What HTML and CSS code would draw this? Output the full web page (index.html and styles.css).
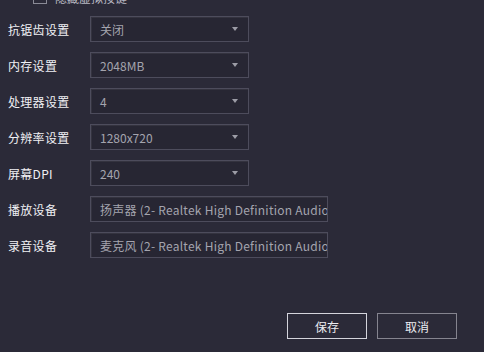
FILE: index.html
```html
<!DOCTYPE html>
<html lang="zh">
<head>
<meta charset="utf-8">
<link rel="stylesheet" href="styles.css">
</head>
<body>
<div class="page">
  <div class="top-row">
    <span class="check"></span>
    <span class="top-text">隐藏虚拟按键</span>
  </div>
  <div class="form">
    <div class="row"><span class="label">抗锯齿设置</span><div class="select"><span>关闭</span><i class="arrow"></i></div></div>
    <div class="row"><span class="label">内存设置</span><div class="select"><span>2048MB</span><i class="arrow"></i></div></div>
    <div class="row"><span class="label">处理器设置</span><div class="select"><span>4</span><i class="arrow"></i></div></div>
    <div class="row"><span class="label">分辨率设置</span><div class="select"><span>1280x720</span><i class="arrow"></i></div></div>
    <div class="row"><span class="label">屏幕DPI</span><div class="select"><span>240</span><i class="arrow"></i></div></div>
    <div class="row"><span class="label">播放设备</span><div class="input"><span>扬声器 (2- Realtek High Definition Audio)</span></div></div>
    <div class="row"><span class="label">录音设备</span><div class="input"><span>麦克风 (2- Realtek High Definition Audio)</span></div></div>
  </div>
  <div class="actions">
    <button class="btn btn-primary">保存</button>
    <button class="btn">取消</button>
  </div>
</div>
</body>
</html>
```
FILE: styles.css
```css
html, body {
  margin: 0;
  padding: 0;
  background: #2b2a38;
}
body {
  font-family: "Noto Sans CJK SC", "Noto Sans", sans-serif;
  font-size: 12px;
  color: #e6e6ea;
}
.page {
  width: 484px;
  height: 352px;
  display: flex;
  flex-direction: column;
  overflow: hidden;
}
.top-row {
  margin-top: -11px;
  height: 16px;
  display: flex;
  align-items: center;
  gap: 8px;
  padding-left: 33px;
  color: #b8b8c2;
}
.check {
  width: 14px;
  height: 14px;
  box-sizing: border-box;
  border: 1px solid #8a8a96;
}
.form {
  margin-top: 11px;
  display: flex;
  flex-direction: column;
  gap: 10px;
  padding-left: 8px;
}
.row {
  display: flex;
  align-items: center;
  height: 26px;
}
.label {
  width: 82px;
  flex: none;
  color: #f0f0f4;
  letter-spacing: 0.3px;
}
.select, .input {
  height: 26px;
  box-sizing: border-box;
  border: 1px solid #4d4c5c;
  box-shadow: inset 1px 1px 0 #34333f;
  background: #272633;
  display: flex;
  align-items: center;
  padding: 0 9px;
  color: #a4a4ae;
  overflow: hidden;
  white-space: nowrap;
}
.select {
  width: 159px;
  justify-content: space-between;
}
.input {
  width: 238px;
  padding-right: 0;
  letter-spacing: 0.25px;
}
.arrow {
  width: 0;
  height: 0;
  border-left: 3.5px solid transparent;
  border-right: 3.5px solid transparent;
  border-top: 4px solid #9c9ca6;
  margin-right: 1px;
}
.actions {
  margin-top: auto;
  display: flex;
  justify-content: flex-end;
  gap: 10px;
  padding: 0 27px 13px 0;
}
.btn {
  width: 80px;
  height: 26px;
  box-sizing: border-box;
  background: #2b2a38;
  border: 1px solid #85848f;
  color: #ececf0;
  font-family: "Noto Sans CJK SC", "Noto Sans", sans-serif;
  font-size: 12px;
  padding: 0;
}
.btn-primary {
  border-color: #d4d4dc;
}
```
